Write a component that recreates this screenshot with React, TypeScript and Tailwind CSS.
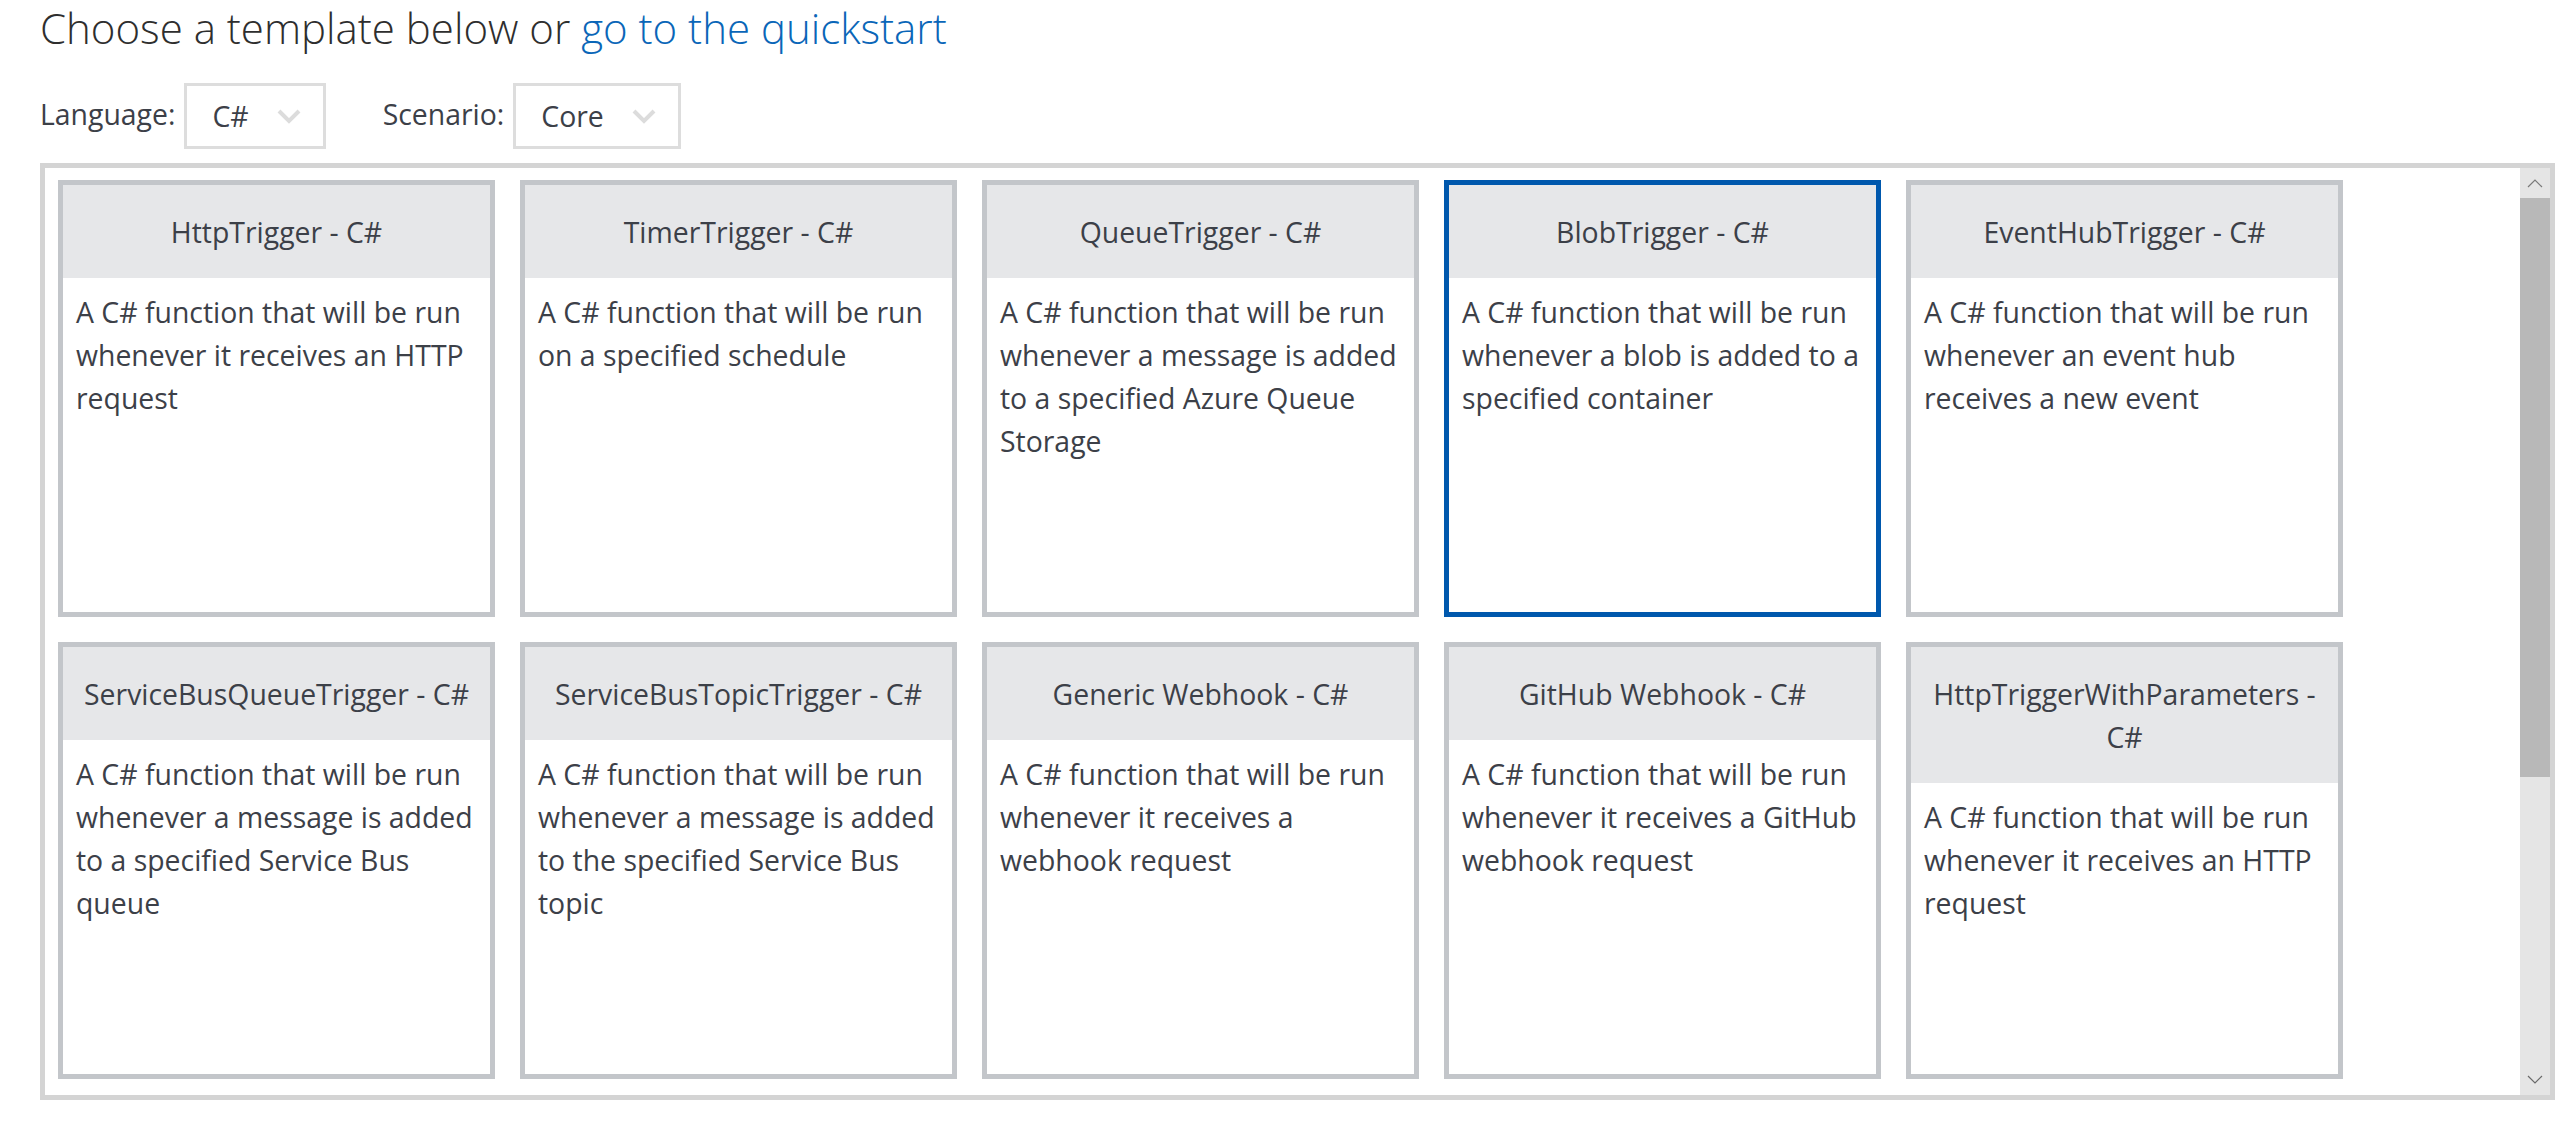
import { useState } from "react";

type Template = {
  name: string;
  description: string;
};

const templates: Template[] = [
  { name: "HttpTrigger - C#", description: "A C# function that will be run whenever it receives an HTTP request" },
  { name: "TimerTrigger - C#", description: "A C# function that will be run on a specified schedule" },
  { name: "QueueTrigger - C#", description: "A C# function that will be run whenever a message is added to a specified Azure Queue Storage" },
  { name: "BlobTrigger - C#", description: "A C# function that will be run whenever a blob is added to a specified container" },
  { name: "EventHubTrigger - C#", description: "A C# function that will be run whenever an event hub receives a new event" },
  { name: "ServiceBusQueueTrigger - C#", description: "A C# function that will be run whenever a message is added to a specified Service Bus queue" },
  { name: "ServiceBusTopicTrigger - C#", description: "A C# function that will be run whenever a message is added to the specified Service Bus topic" },
  { name: "Generic Webhook - C#", description: "A C# function that will be run whenever it receives a webhook request" },
  { name: "GitHub Webhook - C#", description: "A C# function that will be run whenever it receives a GitHub webhook request" },
  { name: "HttpTriggerWithParameters - C#", description: "A C# function that will be run whenever it receives an HTTP request" },
];

function Chevron() {
  return (
    <svg width="24" height="15" viewBox="0 0 24 15" className="shrink-0">
      <polyline points="2,2 12,12 22,2" fill="none" stroke="#dcdcdc" strokeWidth="4" />
    </svg>
  );
}

function Picker({ label, value }: { label: string; value: string }) {
  return (
    <div className="flex items-center gap-[9px]">
      <span className="mb-[3px] text-[#3c4048]">{label}</span>
      <div className="flex h-[66px] items-center gap-[28px] border-[3px] border-[#dddddd] pl-[25px] pr-[22px]">
        <span className="text-[#3c4048]">{value}</span>
        <Chevron />
      </div>
    </div>
  );
}

function TemplateCard({ t, selected, onSelect }: { t: Template; selected: boolean; onSelect: () => void }) {
  return (
    <div
      onClick={onSelect}
      className={`flex h-[437px] w-[437px] shrink-0 cursor-pointer flex-col border-[5px] bg-white ${
        selected ? "border-[#0058ad]" : "border-[#c3c6ca]"
      }`}
    >
      <div className="bg-[#e6e7e9] px-[15px] pb-[24px] pt-[26px] text-center">{t.name}</div>
      <p className="pl-[13px] pr-[11px] pt-[13px]">{t.description}</p>
    </div>
  );
}

function ScrollBar() {
  return (
    <div className="flex w-[30px] shrink-0 flex-col bg-[#e5e5e5]">
      <div className="flex h-[30px] items-center justify-center">
        <svg width="16" height="10" viewBox="0 0 16 10">
          <polyline points="1,9 8,2 15,9" fill="none" stroke="#7a7a7a" strokeWidth="1.2" />
        </svg>
      </div>
      <div className="h-[579px] bg-[#b8b8b8]" />
      <div className="flex-1" />
      <div className="flex h-[30px] items-center justify-center">
        <svg width="16" height="10" viewBox="0 0 16 10">
          <polyline points="1,1 8,8 15,1" fill="none" stroke="#6a6a6a" strokeWidth="1.2" />
        </svg>
      </div>
    </div>
  );
}

export default function App() {
  const [selected, setSelected] = useState(3);

  return (
    <div className="min-h-screen bg-white pl-[40px] pr-[19px] font-['Open_Sans',sans-serif] text-[28.4px] leading-[43px] text-[#3c4048]">
      <h1 className="text-[42px] font-light leading-[56px] text-[#2e2e2e]">
        Choose a template below or{" "}
        <a href="#" className="text-[#0a66b8]">
          go to the quickstart
        </a>
      </h1>

      <div className="mt-[27px] flex items-center gap-[57px]">
        <Picker label="Language:" value="C#" />
        <Picker label="Scenario:" value="Core" />
      </div>

      <div className="mt-[14px] flex h-[937px] border-[5px] border-[#d4d4d4]">
        <div className="flex-1 overflow-hidden pl-[13px] pt-[12px]">
          <div className="flex flex-wrap gap-[25px]">
            {templates.map((t, i) => (
              <TemplateCard key={t.name} t={t} selected={i === selected} onSelect={() => setSelected(i)} />
            ))}
          </div>
        </div>
        <ScrollBar />
      </div>
    </div>
  );
}
